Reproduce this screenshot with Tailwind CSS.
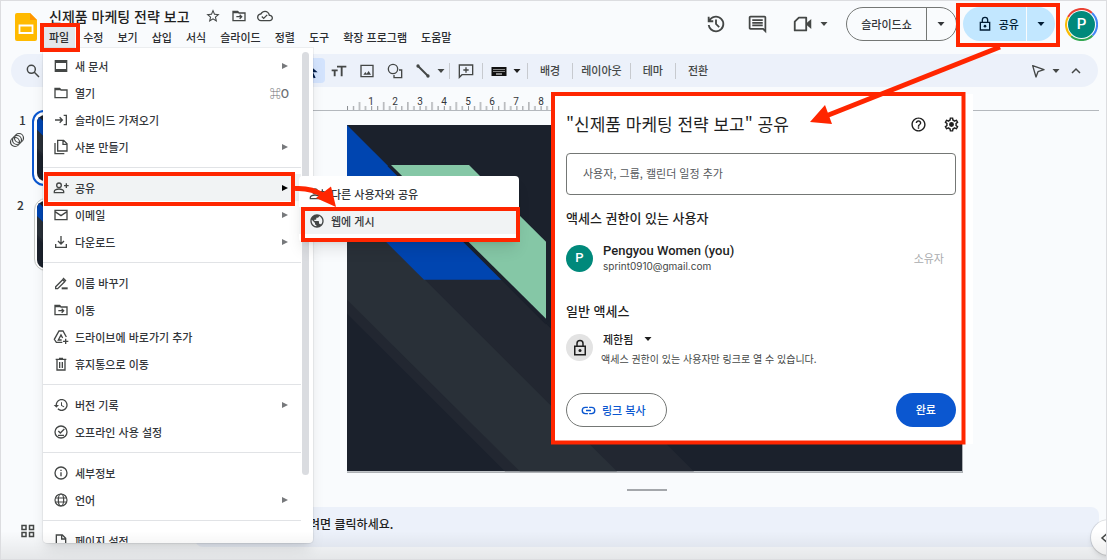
<!DOCTYPE html>
<html lang="ko">
<head>
<meta charset="utf-8">
<title>신제품 마케팅 전략 보고</title>
<script src="https://cdn.jsdelivr.net/npm/@tailwindcss/browser@4"></script>
</head>
<body class="font-['Noto_Sans_CJK_KR',sans-serif] text-[11px] font-medium leading-4 text-[#33363a]">
<svg class="hidden" aria-hidden="true">
  <symbol id="caret" viewBox="0 0 8 8"><path d="M0.500 2h7L4 6z" fill="currentColor"/></symbol>
  <symbol id="tri" viewBox="0 0 8 8"><path d="M1 1v6l6-3z" fill="currentColor"/></symbol>
  <symbol id="move" viewBox="0 0 24 24"><path d="M3 6v13h18V7.500h-9L10 5H3zM3 7h8M8 13h8M13 10l3 3-3 3" fill="none" stroke="currentColor" stroke-width="2"/></symbol>
  <symbol id="lock" viewBox="0 0 24 24"><path d="M5 9.500h14V21H5zM8 9V6a4 4 0 0 1 8 0v3" fill="none" stroke="currentColor" stroke-width="2"/><circle cx="12" cy="15.200" r="2" fill="currentColor"/></symbol>
  <symbol id="slide" viewBox="0 0 615 347" preserveAspectRatio="none">
    <path fill="#1b212c" d="M0 0h615v347H0z"/>
    <path fill="#222731" d="M0 0L347 347H158L0 189z"/>
    <path fill="#293038" d="M0 77L270 347H173L0 175z"/>
    <path fill="#0045b0" d="M0 0l155 155H77L0 78z"/>
    <path fill="none" stroke="#1b212c" stroke-width="4" d="M42 40L200 198"/>
    <path fill="#85c7a6" d="M44 40h78l77 77v77z"/>
  </symbol>
</svg>

<div class="relative flex h-screen flex-col overflow-hidden border border-[#dcdde0] bg-[#f9fbfd]">
  <header class="flex h-[53px] shrink-0 pl-3.5 pr-2">
    <svg class="mt-3 h-7 w-[22px] shrink-0" viewBox="0 0 22 28"><path fill="#ffba00" d="M2 0h13l7 7v19a2 2 0 0 1-2 2H2a2 2 0 0 1-2-2V2a2 2 0 0 1 2-2z"/><path fill="#ff9500" d="M15 0l7 7h-7z"/><path fill="none" stroke="#fff" stroke-width="1.800" d="M4.500 12.500h13v7.500h-13z"/></svg>
    <div class="flex flex-col pl-3">
      <div class="flex h-[26px] items-center pt-1">
        <h1 class="text-sm font-medium text-[#1f1f1f]">신제품 마케팅 전략 보고</h1>
        <div class="ml-[15px] flex items-center gap-2.5 text-[#444746]">
          <button aria-label="별표"><svg class="size-4" viewBox="0 0 24 24" fill="currentColor"><path d="M22 9.240l-7.190-.62L12 2 9.190 8.630 2 9.240l5.460 4.730L5.820 21 12 17.270 18.180 21l-1.630-7.030L22 9.240zM12 15.400l-3.760 2.270 1-4.280-3.320-2.880 4.380-.38L12 6.100l1.710 4.040 4.380.38-3.320 2.880 1 4.280L12 15.400z"/></svg></button>
          <button aria-label="이동"><svg class="size-4"><use href="#move"/></svg></button>
          <button aria-label="문서 상태"><svg class="size-4" viewBox="0 0 24 24" fill="currentColor"><path d="M19.350 10.040C18.670 6.590 15.640 4 12 4 9.110 4 6.600 5.640 5.350 8.040 2.340 8.360 0 10.910 0 14c0 3.310 2.690 6 6 6h13c2.760 0 5-2.240 5-5 0-2.640-2.050-4.780-4.650-4.960zM19 18H6c-2.210 0-4-1.790-4-4 0-2.050 1.530-3.760 3.560-3.970l1.070-.11.5-.95C8.080 7.140 9.940 6 12 6c2.620 0 4.880 1.860 5.390 4.430l.3 1.500 1.530.11c1.560.1 2.780 1.410 2.780 2.960 0 1.650-1.350 3-3 3zm-9-3.820l-2.090-2.090L6.500 13.500 10 17l6.010-6.010-1.410-1.410z"/></svg></button>
        </div>
      </div>
      <nav class="flex h-[21px] items-center gap-3.5 text-[#2b2d30]">
        <button class="-mx-1.5 h-full bg-[#e4e7eb] px-1.5 pb-0.5">파일</button>
        <button class="pb-0.5">수정</button><button class="pb-0.5">보기</button><button class="pb-0.5">삽입</button><button class="pb-0.5">서식</button><button class="pb-0.5">슬라이드</button><button class="pb-0.5">정렬</button><button class="pb-0.5">도구</button><button class="pb-0.5">확장 프로그램</button><button class="pb-0.5">도움말</button>
      </nav>
    </div>
    <div class="ml-auto flex h-[46px] items-center text-[#444746]">
      <button aria-label="버전 기록"><svg class="size-[22px]" viewBox="0 0 24 24" fill="currentColor"><path d="M12 21q-3.450 0-6.010-2.290T3.050 13H5.100q.35 2.600 2.310 4.300T12 19q2.930 0 4.960-2.040T19 12q0-2.930-2.040-4.960T12 5q-1.730 0-3.230.8T6.250 8H9v2H3V4h2v2.350q1.280-1.600 3.110-2.480T12 3q1.880 0 3.510.71t2.850 1.930 1.930 2.850T21 12t-.71 3.510-1.930 2.850-2.850 1.930T12 21zm2.800-4.800L11 12.400V7h2v4.600l3.200 3.200-1.400 1.400z"/></svg></button>
      <button class="ml-5" aria-label="댓글"><svg class="size-[21px]" viewBox="0 0 24 24" fill="currentColor"><path d="M21.990 4c0-1.100-.89-2-1.990-2H4c-1.100 0-2 .9-2 2v12c0 1.100.9 2 2 2h14l4 4-.01-18zM20 4v13.170L18.830 16H4V4h16zM6 12h12v2H6zm0-3h12v2H6zm0-3h12v2H6z"/></svg></button>
      <button class="ml-6 flex items-center gap-1.5" aria-label="화상 통화"><svg class="size-[22px]" viewBox="0 0 24 24"><path d="M7.500 5H15.500V19H3V9.500z" fill="none" stroke="currentColor" stroke-width="2" stroke-linejoin="round"/><path d="M16 11l5-4.500v11L16 13z" fill="currentColor"/></svg><svg class="size-2"><use href="#caret"/></svg></button>
      <div class="ml-[18px] flex h-[34px] items-center rounded-full border border-[#747775] text-[#33363a]">
        <button class="h-full w-20 border-r border-[#747775]">슬라이드쇼</button>
        <button class="flex h-full w-[29px] items-center justify-center pr-0.5" aria-label="슬라이드쇼 옵션"><svg class="size-2"><use href="#caret"/></svg></button>
      </div>
      <div class="ml-1.5 flex h-[34px] items-center overflow-hidden rounded-full bg-[#c2e7ff] text-[#001d35]">
        <button class="flex h-full w-16 items-center justify-end gap-1.5 border-r border-[#f9fbfd] pr-[7px]"><svg class="size-4"><use href="#lock"/></svg>공유</button>
        <button class="flex h-full w-7 items-center justify-center" aria-label="공유 옵션"><svg class="size-2"><use href="#caret"/></svg></button>
      </div>
      <button class="relative ml-2.5 grid size-[33px] place-items-center" aria-label="계정">
        <svg class="absolute inset-0 size-full" viewBox="0 0 33 33" fill="none" stroke-width="2"><path stroke="#ea4335" d="M3 9A15.500 15.500 0 0 1 27 5"/><path stroke="#4285f4" d="M27 5A15.500 15.500 0 0 1 27.500 27.500"/><path stroke="#34a853" d="M27.500 27.500A15.500 15.500 0 0 1 6 28"/><path stroke="#fbbc04" d="M6 28A15.500 15.500 0 0 1 3 9"/></svg>
        <span class="relative grid size-[27px] place-items-center rounded-full bg-[#00897b] font-[Roboto,sans-serif] text-[15px] text-white">P</span>
      </button>
    </div>
  </header>

  <div class="ml-2.5 mr-2 flex h-[33px] shrink-0 items-center rounded-full bg-[#ecf1fa] pl-3.5 pr-3.5 text-[#444746]">
    <button aria-label="메뉴 검색"><svg class="size-4" viewBox="0 0 24 24" fill="none" stroke="currentColor" stroke-width="2.200"><circle cx="9.500" cy="9.500" r="6"/><path d="M14 14l7 7"/></svg></button>
    <button class="ml-[259px] grid h-[25px] w-[25px] place-items-center rounded bg-[#d3e3fd] text-[#041e49]" aria-label="선택"><svg class="size-4" viewBox="0 0 24 24"><path d="M5 2l14 12h-7l4 8-3 1-4-8-4 4z" fill="currentColor"/></svg></button>
    <button class="ml-1.5" aria-label="텍스트 상자"><svg class="size-4" viewBox="0 0 24 24" fill="none" stroke="currentColor" stroke-width="2.800"><path d="M9 5.500h14M16 5.500V20M1 11h9M5.500 11v9"/></svg></button>
    <button class="ml-3" aria-label="이미지"><svg class="size-4" viewBox="0 0 24 24" fill="none" stroke="currentColor" stroke-width="2"><path d="M3 3.500h18v17H3z"/><path fill="currentColor" stroke="none" d="M6.500 17.500l3-4 2 2.500 3-4 3.500 5.500z"/></svg></button>
    <button class="ml-3" aria-label="도형"><svg class="size-4" viewBox="0 0 24 24" fill="none" stroke="currentColor" stroke-width="2"><circle cx="9" cy="9" r="7"/><path d="M18 10.500h4V22H10.500v-4"/></svg></button>
    <button class="ml-3 flex items-center gap-1.5" aria-label="선"><svg class="size-4" viewBox="0 0 24 24"><path d="M4.500 4.500l15 15" stroke="currentColor" stroke-width="3"/><circle cx="4.500" cy="4.500" r="2.500" fill="currentColor"/><circle cx="19.500" cy="19.500" r="2.500" fill="currentColor"/></svg><svg class="size-2"><use href="#caret"/></svg></button>
    <span class="ml-1 mr-2 h-4 w-px bg-[#c7cacf]"></span>
    <button aria-label="댓글 추가"><svg class="size-4" viewBox="0 0 24 24" fill="none" stroke="currentColor" stroke-width="2"><path d="M2 3h20v14.500H6L2 21.500zM12 6.500v8M8 10.500h8"/></svg></button>
    <span class="mx-2 h-4 w-px bg-[#c7cacf]"></span>
    <button class="flex items-center gap-1.5 text-[#1f1f1f]" aria-label="입력 도구"><svg class="size-4" viewBox="0 0 16 16"><path d="M0.500 4h15v9h-15z" fill="#111"/><path d="M2.500 6.500h11M2.500 8.500h11" stroke="#fff" stroke-dasharray="1 1"/><path d="M5 11h6" stroke="#fff"/></svg><svg class="size-2"><use href="#caret"/></svg></button>
    <span class="ml-1.5 h-4 w-px bg-[#c7cacf]"></span>
    <button class="px-3 pb-px">배경</button>
    <span class="h-4 w-px bg-[#c7cacf]"></span>
    <button class="px-2 pb-px">레이아웃</button>
    <span class="h-4 w-px bg-[#c7cacf]"></span>
    <button class="px-3 pb-px">테마</button>
    <span class="h-4 w-px bg-[#c7cacf]"></span>
    <button class="px-3 pb-px">전환</button>
    <div class="ml-auto flex items-center">
      <button class="flex items-center gap-1.5" aria-label="모드"><svg class="size-4" viewBox="0 0 24 24" fill="none" stroke="currentColor" stroke-width="2" stroke-linejoin="round"><path d="M4 4l17 6-9 3-3 8z"/></svg><svg class="size-2"><use href="#caret"/></svg></button>
      <button class="ml-2" aria-label="메뉴 숨기기"><svg class="size-4" viewBox="0 0 24 24" fill="none" stroke="currentColor" stroke-width="2.200"><path d="M6 15l6-6 6 6"/></svg></button>
    </div>
  </div>

  <main class="flex min-h-0 flex-1">
    <aside class="flex w-[194px] shrink-0 flex-col pl-2 pt-[23px] text-xs">
      <div class="flex">
        <div class="flex w-[23px] flex-col items-center">
          <span class="pl-1 leading-5">1</span>
          <svg class="mt-0.5 size-4 self-start" viewBox="0 0 16 16" fill="none" stroke="#444746" stroke-width="1.200"><circle cx="10" cy="6" r="4.500"/><circle cx="8" cy="8" r="4.500"/><circle cx="6" cy="10" r="4.500"/></svg>
        </div>
        <button class="h-[76px] w-32 rounded-xl border-2 border-[#0b57d0] bg-white p-[3px]" aria-label="슬라이드 1"><svg class="size-full rounded-lg"><use href="#slide"/></svg></button>
      </div>
      <div class="mt-3 flex">
        <span class="w-[23px] pl-2 leading-[14px]">2</span>
        <button class="ml-0.5 h-[73px] w-32 rounded-xl border border-[#c4c7c5] bg-white p-0.5" aria-label="슬라이드 2"><svg class="size-full rounded-lg"><use href="#slide"/></svg></button>
      </div>
      <button class="mb-5 ml-[11px] mt-auto self-start" aria-label="바둑판 보기"><svg class="size-4" viewBox="0 0 16 16" fill="none" stroke="#444746" stroke-width="1.500"><path d="M2 2.500h4v4H2zM9.500 2.500h4v4h-4zM2 9.500h4v4H2zM9.500 9.500h4v4h-4z"/></svg></button>
    </aside>
    <section class="mr-[7px] flex flex-1 flex-col">
      <div class="mt-2 h-4 border-b border-[#b4b8bd] pl-[152px]">
        <svg class="h-full w-[240px] font-[Roboto,sans-serif] font-normal" viewBox="0 0 240 15" fill="#33363a" font-size="10" text-anchor="middle">
          <defs><pattern id="ticks" width="24.200" height="15" patternUnits="userSpaceOnUse"><path stroke="#8a8d91" d="M.5 11v4M6.500 11v4M12.500 7v8M18.500 11v4"/></pattern></defs>
          <path fill="url(#ticks)" d="M0 0h240v15H0z"/>
          <text x="24" y="10">1</text><text x="48" y="10">2</text><text x="73" y="10">3</text><text x="97" y="10">4</text><text x="121" y="10">5</text><text x="145" y="10">6</text><text x="169" y="10">7</text><text x="194" y="10">8</text>
        </svg>
      </div>
      <div class="pl-[152px] pr-[136px] pt-3.5"><svg class="aspect-[615/347] w-full border-b border-r border-[#aeb1b5]"><use href="#slide"/></svg></div>
      <div class="mx-auto mt-4 h-0.5 w-10 bg-[#a4a7ab]"></div>
      <div class="mb-3 mt-auto flex h-10 items-center rounded-lg bg-[#ecf1fa] px-2 pb-1.5 text-xs text-[#1f1f1f]">발표자 노트를 추가하려면 클릭하세요.</div>
    </section>
  </main>

  <button class="absolute -right-5 bottom-1 flex size-[35px] items-center rounded-full bg-white pl-2 shadow-md ring-1 ring-black/10" aria-label="측면 패널 표시"><svg class="size-3" viewBox="0 0 12 12" fill="none" stroke="#444746" stroke-width="1.500"><path d="M7.500 2L3 6l4.500 4"/></svg></button>

  <div role="menu" class="absolute left-[42px] top-[47px] flex h-[495px] w-[270px] overflow-hidden rounded-b bg-white shadow-lg ring-1 ring-black/5">
    <div class="flex flex-1 flex-col pt-1 [&_button]:flex [&_button]:h-[27px] [&_button]:shrink-0 [&_button]:items-center [&_button]:gap-1.5 [&_button]:pl-2.5 [&_button]:pr-3 [&_hr]:mb-1.5 [&_hr]:mt-[7px] [&_hr]:shrink-0 [&_hr]:border-[#e1e3e6]">
      <button role="menuitem"><svg class="size-4" viewBox="0 0 24 24" fill="none" stroke="#444746"><path stroke-width="2" d="M3.500 4h17v16h-17z"/><path stroke-width="4" d="M3.500 5.500h17M3.500 18.500h17"/></svg>새 문서<svg class="ml-auto size-2 text-[#77797c]"><use href="#tri"/></svg></button>
      <button role="menuitem"><svg class="size-4" viewBox="0 0 24 24" fill="none" stroke="#444746" stroke-width="2"><path d="M3 5h7l2 2.500h9V19H3zM3 7h8"/></svg>열기<span class="ml-auto text-[#6b6e72]">⌘O</span></button>
      <button role="menuitem"><svg class="size-4" viewBox="0 0 24 24" fill="none" stroke="#444746" stroke-width="2"><path d="M3 12h11M10 8l4 4-4 4M16 5h4v14h-4"/></svg>슬라이드 가져오기</button>
      <button role="menuitem"><svg class="size-4" viewBox="0 0 24 24" fill="none" stroke="#444746" stroke-width="2"><path d="M7 2h9l5 5v11H7zM15 2v6h6M3 6v16h14"/></svg>사본 만들기<svg class="ml-auto size-2 text-[#77797c]"><use href="#tri"/></svg></button>
      <hr>
      <button role="menuitem" class="bg-[#f1f3f4]"><svg class="size-4" viewBox="0 0 24 24" fill="none" stroke="#444746" stroke-width="2"><circle cx="9" cy="8" r="3.500"/><path d="M2 19v-2c0-2 4-3.500 7-3.500s7 1.500 7 3.500v2zM20 5v7M16.500 8.500h7"/></svg>공유<svg class="ml-auto size-2 text-black"><use href="#tri"/></svg></button>
      <button role="menuitem"><svg class="size-4" viewBox="0 0 24 24" fill="none" stroke="#444746" stroke-width="2"><path d="M3 5h18v14H3zM3 7l9 6 9-6"/></svg>이메일<svg class="ml-auto size-2 text-[#77797c]"><use href="#tri"/></svg></button>
      <button role="menuitem"><svg class="size-4" viewBox="0 0 24 24" fill="none" stroke="#444746" stroke-width="2"><path d="M12 3v12M7.500 10.500L12 15l4.500-4.500M4 15v5h16v-5"/></svg>다운로드<svg class="ml-auto size-2 text-[#77797c]"><use href="#tri"/></svg></button>
      <hr>
      <button role="menuitem"><svg class="size-4" viewBox="0 0 24 24" fill="none" stroke="#444746" stroke-width="2"><path d="M4 17.500L14.500 7l3 3L7 20.500H4zM15 4.500l4.500 4.500"/><path stroke-width="3" d="M13 20h9"/></svg>이름 바꾸기</button>
      <button role="menuitem"><svg class="size-4 text-[#444746]"><use href="#move"/></svg>이동</button>
      <button role="menuitem"><svg class="size-4" viewBox="0 0 24 24" fill="none" stroke="#444746" stroke-width="2"><path d="M14 20H5l-3-4.500L9 3h6l5 9M13 16.500H8L12 9l2.500 4.500M19 14.500v8M15 18.500h8"/></svg>드라이브에 바로가기 추가</button>
      <button role="menuitem"><svg class="size-4" viewBox="0 0 24 24" fill="none" stroke="#444746" stroke-width="2"><path d="M6 6v15h12V6M4 5h16M9 3.500h6M10 9v9M14 9v9"/></svg>휴지통으로 이동</button>
      <hr>
      <button role="menuitem"><svg class="size-4" viewBox="0 0 24 24" fill="#444746"><path d="M13 3c-4.970 0-9 4.030-9 9H1l3.890 3.890.07.14L9 12H6c0-3.870 3.130-7 7-7s7 3.130 7 7-3.130 7-7 7c-1.930 0-3.680-.79-4.940-2.060l-1.420 1.420C8.270 19.990 10.510 21 13 21c4.970 0 9-4.030 9-9s-4.030-9-9-9zm-1 5v5l4.280 2.540.72-1.210-3.500-2.080V8H12z"/></svg>버전 기록<svg class="ml-auto size-2 text-[#77797c]"><use href="#tri"/></svg></button>
      <button role="menuitem"><svg class="size-4" viewBox="0 0 24 24" fill="none" stroke="#444746" stroke-width="2"><circle cx="12" cy="12" r="9"/><path d="M8 10.500l3 3 6-6M7.500 17h9"/></svg>오프라인 사용 설정</button>
      <hr>
      <button role="menuitem"><svg class="size-4" viewBox="0 0 24 24" fill="none" stroke="#444746" stroke-width="2"><circle cx="12" cy="12" r="9"/><path d="M12 11v6M12 7v2"/></svg>세부정보</button>
      <button role="menuitem"><svg class="size-4" viewBox="0 0 24 24" fill="none" stroke="#444746" stroke-width="1.800"><circle cx="12" cy="12" r="9"/><ellipse cx="12" cy="12" rx="4" ry="9"/><path d="M4 9h16M4 15h16"/></svg>언어<svg class="ml-auto size-2 text-[#77797c]"><use href="#tri"/></svg></button>
      <hr>
      <button role="menuitem"><svg class="size-4" viewBox="0 0 24 24" fill="none" stroke="#444746" stroke-width="2"><path d="M5 3h9l5 5v13H5zM13 3v6h6"/></svg>페이지 설정</button>
    </div>
    <div class="w-3 pt-1"><div class="ml-px h-[423px] w-[7px] rounded-full bg-[#dadce0]"></div></div>
  </div>

  <div role="menu" class="absolute left-[298px] top-[175px] flex h-[66px] w-[220px] flex-col rounded bg-white pt-1 shadow-lg">
    <button role="menuitem" class="flex h-[27px] items-center gap-1.5 pl-2.5"><svg class="size-4" viewBox="0 0 24 24" fill="none" stroke="#444746" stroke-width="2"><circle cx="9" cy="8" r="3.500"/><path d="M2 19v-2c0-2 4-3.500 7-3.500s7 1.500 7 3.500v2zM20 5v7M16.500 8.500h7"/></svg>다른 사용자와 공유</button>
    <button role="menuitem" class="flex h-[27px] items-center gap-1.5 bg-[#f1f3f4] pl-2.5"><svg class="size-4" viewBox="0 0 24 24" fill="#444746"><path d="M12 2C6.480 2 2 6.480 2 12s4.480 10 10 10 10-4.480 10-10S17.520 2 12 2zm-1 17.930c-3.950-.49-7-3.850-7-7.930 0-.62.08-1.210.21-1.790L9 15v1c0 1.100.9 2 2 2v1.930zm6.900-2.540c-.26-.81-1-1.390-1.900-1.390h-1v-3c0-.55-.45-1-1-1H8v-2h2c.55 0 1-.45 1-1V7h2c1.100 0 2-.9 2-2v-.41c2.930 1.190 5 4.060 5 7.410 0 2.080-.8 3.970-2.100 5.390z"/></svg>웹에 게시</button>
  </div>

  <div role="dialog" aria-labelledby="dlg" class="absolute left-[550px] top-[93px] flex w-[422px] flex-col bg-white pb-[17px] pl-[15px] pr-[17px] text-[#1f1f1f]">
    <div class="-mr-1 flex h-[59px] items-center">
      <h2 id="dlg" class="text-[17px] font-normal leading-6">"신제품 마케팅 전략 보고" 공유</h2>
      <button class="ml-auto pt-0.5" aria-label="도움말"><svg class="size-[17px]" viewBox="0 0 24 24" fill="currentColor"><path d="M11 18h2v-2h-2v2zm1-16C6.480 2 2 6.480 2 12s4.480 10 10 10 10-4.480 10-10S17.520 2 12 2zm0 18c-4.410 0-8-3.590-8-8s3.590-8 8-8 8 3.590 8 8-3.590 8-8 8zm0-14c-2.210 0-4 1.790-4 4h2c0-1.100.9-2 2-2s2 .9 2 2c0 2-3 1.750-3 5h2c0-2.250 3-2.500 3-5 0-2.210-1.790-4-4-4z"/></svg></button>
      <button class="ml-4 pt-0.5" aria-label="설정"><svg class="size-[17px]" viewBox="0 0 24 24" fill="currentColor"><path d="M19.430 12.980c.04-.32.07-.64.07-.98s-.03-.66-.07-.98l2.110-1.650c.19-.15.24-.42.12-.64l-2-3.460c-.09-.16-.26-.25-.44-.25-.06 0-.12.01-.17.03l-2.490 1c-.52-.4-1.080-.73-1.690-.98l-.38-2.650C14.460 2.180 14.250 2 14 2h-4c-.25 0-.46.18-.49.42l-.38 2.650c-.61.25-1.170.59-1.690.98l-2.490-1c-.06-.02-.12-.03-.18-.03-.17 0-.34.09-.43.25l-2 3.460c-.13.22-.07.49.12.64l2.110 1.650c-.04.32-.07.65-.07.98s.03.66.07.98l-2.110 1.650c-.19.15-.24.42-.12.64l2 3.460c.09.16.26.25.44.25.06 0 .12-.01.17-.03l2.490-1c.52.4 1.080.73 1.690.98l.38 2.650c.03.24.24.42.49.42h4c.25 0 .46-.18.49-.42l.38-2.650c.61-.25 1.170-.59 1.690-.98l2.490 1c.06.02.12.03.18.03.17 0 .34-.09.43-.25l2-3.460c.12-.22.07-.49-.12-.64l-2.110-1.650zm-1.980-1.710c.04.31.05.52.05.73 0 .21-.02.43-.05.73l-.14 1.130.89.7 1.080.84-.7 1.210-1.270-.51-1.040-.42-.9.68c-.43.32-.84.56-1.250.73l-1.060.43-.16 1.130-.2 1.350h-1.400l-.19-1.350-.16-1.130-1.060-.43c-.43-.18-.83-.41-1.230-.71l-.91-.7-1.060.43-1.270.51-.7-1.210 1.080-.84.89-.7-.14-1.130c-.03-.31-.05-.54-.05-.74s.02-.43.05-.73l.14-1.130-.89-.7-1.080-.84.7-1.210 1.270.51 1.040.42.9-.68c.43-.32.84-.56 1.250-.73l1.060-.43.16-1.130.2-1.350h1.390l.19 1.350.16 1.130 1.060.43c.43.18.83.41 1.230.71l.91.7 1.060-.43 1.270-.51.7 1.210-1.070.85-.89.7.14 1.130z"/><circle cx="12" cy="12" r="3.500"/></svg></button>
    </div>
    <input aria-label="사용자, 그룹, 캘린더 일정 추가" placeholder="사용자, 그룹, 캘린더 일정 추가" class="h-[42px] rounded border border-[#747775] px-4 pb-0.5 font-normal placeholder:text-[#55585c]">
    <h3 class="mt-3 text-[13px] leading-[22px]">액세스 권한이 있는 사용자</h3>
    <div class="mt-3 flex h-[34px] items-center">
      <span class="grid size-[27px] place-items-center rounded-full bg-[#00897b] font-[Roboto,sans-serif] text-[13px] text-white">P</span>
      <div class="ml-2.5">
        <p class="font-[Roboto,sans-serif] text-[13px] leading-4">Pengyou Women (you)</p>
        <p class="font-[Inter,sans-serif] text-[10px] font-normal leading-[14px] text-[#444746]">sprint0910@gmail.com</p>
      </div>
      <span class="ml-auto mr-3 font-normal text-[#a9abae]">소유자</span>
    </div>
    <h3 class="mt-[25px] text-[13px] leading-[22px]">일반 액세스</h3>
    <div class="mt-2 flex h-[38px]">
      <span class="mt-1 grid size-[27px] place-items-center rounded-full bg-[#e3e3e3]"><svg class="size-[18px]"><use href="#lock"/></svg></span>
      <div class="ml-2">
        <div class="relative flex h-[18px] items-center pl-0.5">
          <select aria-label="일반 액세스" class="w-14 appearance-none bg-transparent"><option>제한됨</option></select>
          <svg class="pointer-events-none absolute left-[43px] size-2"><use href="#caret"/></svg>
        </div>
        <p class="text-[10px] font-normal leading-[22px] text-[#444746]">액세스 권한이 있는 사용자만 링크로 열 수 있습니다.</p>
      </div>
    </div>
    <div class="mt-[25px] flex justify-between">
      <button class="flex h-[34px] items-center gap-1.5 rounded-full border border-[#747775] pl-3.5 pr-5 text-[#0b57d0]"><svg class="size-[15px]" viewBox="0 0 24 24" fill="none" stroke="currentColor" stroke-width="2.200"><path d="M11 7H7a5 5 0 0 0 0 10h4M13 7h4a5 5 0 0 1 0 10h-4M8 12h8"/></svg>링크 복사</button>
      <button class="h-[34px] rounded-full bg-[#0b57d0] px-5 pb-0.5 text-white">완료</button>
    </div>
  </div>

  <div class="pointer-events-none absolute inset-x-0 bottom-0 h-7 bg-linear-to-b from-transparent to-black/8"></div>

  <svg class="pointer-events-none absolute left-0 top-0 h-[560px] w-[1107px]" viewBox="1 1 1107 560" fill="none" stroke="#ff2600" stroke-width="4" aria-hidden="true">
    <path d="M42 25h36v25H42zM46 174h247v30H46zM303 209h215v31H303zM958 5h100v40H958zM553 94h410.500v348.500H553z"/>
    <path stroke-width="5" d="M1000 47L826 116"/>
    <path stroke-width="5" d="M295 188.500q16-1 29 7"/>
    <path fill="#ff2600" stroke="none" d="M810 122l15-17 7 19zM336 207l-5-20.500-15 11.500z"/>
  </svg>
</div>
</body>
</html>
